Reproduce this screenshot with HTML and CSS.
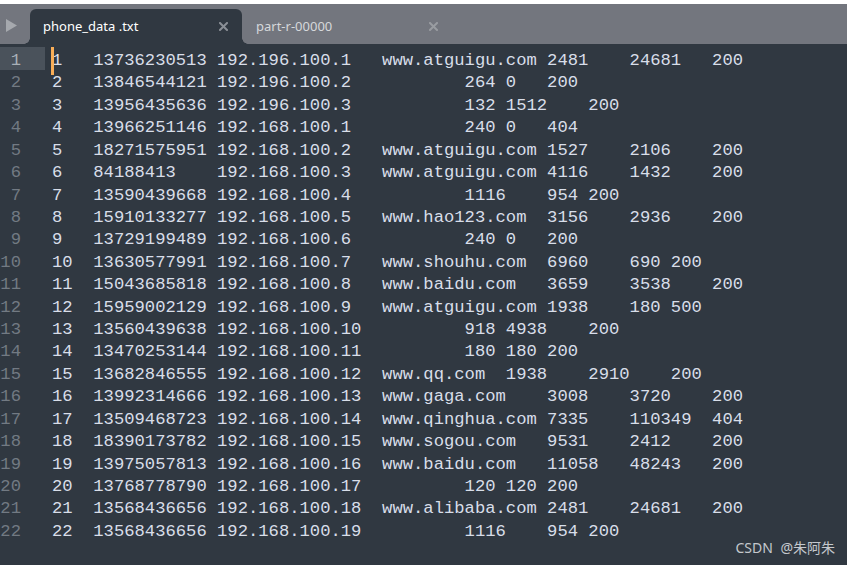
FILE: index.html
```html
<!DOCTYPE html>
<html lang="zh">
<head>
<meta charset="utf-8">
<title>phone_data .txt</title>
<link rel="stylesheet" href="styles.css">
</head>
<body>
<div class="window">
  <div class="topstrip"></div>
  <div class="tabbar">
    <div class="side">
      <svg class="play" width="11" height="13" viewBox="0 0 11 13"><polygon points="0,0 11,6.5 0,13" fill="#a6a9ae"/></svg>
    </div>
    <div class="tab active"><span class="title">phone_data .txt</span><svg class="close" width="9" height="9" viewBox="0 0 9 9"><path d="M1 1 L8 8 M8 1 L1 8" stroke-width="2" stroke-linecap="square"/></svg></div>
    <div class="tab"><span class="title">part-r-00000</span><svg class="close" width="9" height="9" viewBox="0 0 9 9"><path d="M1 1 L8 8 M8 1 L1 8" stroke-width="2" stroke-linecap="square"/></svg></div>
  </div>
  <div class="editor">
    <div class="line current"><span class="ln">1</span><span class="code"><span class="caret"></span>1&#9;13736230513&#9;192.196.100.1&#9;www.atguigu.com&#9;2481&#9;24681&#9;200</span></div>
    <div class="line"><span class="ln">2</span><span class="code">2&#9;13846544121&#9;192.196.100.2&#9;&#9;&#9;264&#9;0&#9;200</span></div>
    <div class="line"><span class="ln">3</span><span class="code">3&#9;13956435636&#9;192.196.100.3&#9;&#9;&#9;132&#9;1512&#9;200</span></div>
    <div class="line"><span class="ln">4</span><span class="code">4&#9;13966251146&#9;192.168.100.1&#9;&#9;&#9;240&#9;0&#9;404</span></div>
    <div class="line"><span class="ln">5</span><span class="code">5&#9;18271575951&#9;192.168.100.2&#9;www.atguigu.com&#9;1527&#9;2106&#9;200</span></div>
    <div class="line"><span class="ln">6</span><span class="code">6&#9;84188413&#9;192.168.100.3&#9;www.atguigu.com&#9;4116&#9;1432&#9;200</span></div>
    <div class="line"><span class="ln">7</span><span class="code">7&#9;13590439668&#9;192.168.100.4&#9;&#9;&#9;1116&#9;954&#9;200</span></div>
    <div class="line"><span class="ln">8</span><span class="code">8&#9;15910133277&#9;192.168.100.5&#9;www.hao123.com&#9;3156&#9;2936&#9;200</span></div>
    <div class="line"><span class="ln">9</span><span class="code">9&#9;13729199489&#9;192.168.100.6&#9;&#9;&#9;240&#9;0&#9;200</span></div>
    <div class="line"><span class="ln">10</span><span class="code">10&#9;13630577991&#9;192.168.100.7&#9;www.shouhu.com&#9;6960&#9;690&#9;200</span></div>
    <div class="line"><span class="ln">11</span><span class="code">11&#9;15043685818&#9;192.168.100.8&#9;www.baidu.com&#9;3659&#9;3538&#9;200</span></div>
    <div class="line"><span class="ln">12</span><span class="code">12&#9;15959002129&#9;192.168.100.9&#9;www.atguigu.com&#9;1938&#9;180&#9;500</span></div>
    <div class="line"><span class="ln">13</span><span class="code">13&#9;13560439638&#9;192.168.100.10&#9;&#9;&#9;918&#9;4938&#9;200</span></div>
    <div class="line"><span class="ln">14</span><span class="code">14&#9;13470253144&#9;192.168.100.11&#9;&#9;&#9;180&#9;180&#9;200</span></div>
    <div class="line"><span class="ln">15</span><span class="code">15&#9;13682846555&#9;192.168.100.12&#9;www.qq.com&#9;1938&#9;2910&#9;200</span></div>
    <div class="line"><span class="ln">16</span><span class="code">16&#9;13992314666&#9;192.168.100.13&#9;www.gaga.com&#9;3008&#9;3720&#9;200</span></div>
    <div class="line"><span class="ln">17</span><span class="code">17&#9;13509468723&#9;192.168.100.14&#9;www.qinghua.com&#9;7335&#9;110349&#9;404</span></div>
    <div class="line"><span class="ln">18</span><span class="code">18&#9;18390173782&#9;192.168.100.15&#9;www.sogou.com&#9;9531&#9;2412&#9;200</span></div>
    <div class="line"><span class="ln">19</span><span class="code">19&#9;13975057813&#9;192.168.100.16&#9;www.baidu.com&#9;11058&#9;48243&#9;200</span></div>
    <div class="line"><span class="ln">20</span><span class="code">20&#9;13768778790&#9;192.168.100.17&#9;&#9;&#9;120&#9;120&#9;200</span></div>
    <div class="line"><span class="ln">21</span><span class="code">21&#9;13568436656&#9;192.168.100.18&#9;www.alibaba.com&#9;2481&#9;24681&#9;200</span></div>
    <div class="line"><span class="ln">22</span><span class="code">22&#9;13568436656&#9;192.168.100.19&#9;&#9;&#9;1116&#9;954&#9;200</span></div>
  </div>
  <div class="watermark">CSDN @朱阿朱</div>
</div>
</body>
</html>
```
FILE: styles.css
```css
html, body {
  margin: 0;
  padding: 0;
  background: #303841;
}
.window {
  position: relative;
  width: 847px;
  height: 565px;
  overflow: hidden;
  background: #303841;
}
.topstrip {
  height: 4px;
  background: #ffffff;
}
.tabbar {
  height: 40px;
  background: #73767e;
  display: flex;
  align-items: flex-end;
  font-family: "Noto Sans", "Open Sans", sans-serif;
  font-size: 13px;
}
.side {
  width: 30px;
  align-self: stretch;
  display: flex;
  align-items: center;
  padding-left: 6px;
  box-sizing: border-box;
}
.play {
  display: block;
  margin-top: 2px;
}
.tab {
  position: relative;
  width: 212px;
  height: 35px;
  box-sizing: border-box;
  display: flex;
  align-items: center;
  justify-content: space-between;
  padding: 0 14px 2px 14px;
  color: #d6d8db;
}
.tab.active {
  background: #303841;
  border-radius: 6px 6px 0 0;
  color: #ffffff;
  padding-left: 13px;
}
.tab.active::before,
.tab.active::after {
  content: "";
  position: absolute;
  bottom: 0;
  width: 6px;
  height: 6px;
}
.tab.active::before {
  left: -6px;
  background: radial-gradient(circle at 0 0, #73767e 5.5px, #303841 6px);
}
.tab.active::after {
  right: -6px;
  background: radial-gradient(circle at 100% 0, #73767e 5.5px, #303841 6px);
}
.close {
  display: block;
  stroke: #8a8f96;
  margin-top: 2px;
}
.tab:not(.active) .close {
  stroke: #999ca1;
  margin-right: 2px;
}
.editor {
  padding-top: 3px;
  font-family: "Liberation Mono", monospace;
  font-size: 17.2px;
  color: #d8dee9;
}
.line {
  display: flex;
  height: 22.43px;
  line-height: 22.43px;
  white-space: pre;
  tab-size: 4;
  -moz-tab-size: 4;
}
.ln {
  width: 45px;
  flex: none;
  box-sizing: border-box;
  padding: 3px 24px 0 0;
  text-align: right;
  color: #727a83;
}
.current .ln {
  background: #4a525b;
  color: #a9b0b7;
  height: 23px;
}
.code {
  position: relative;
  padding: 3px 0 0 7px;
}
.caret {
  position: absolute;
  left: 6px;
  top: 0;
  width: 3px;
  height: 28px;
  background: #f9ae58;
}
.watermark {
  position: absolute;
  right: 12px;
  bottom: 8px;
  font-family: "Noto Sans", "Noto Sans CJK SC", sans-serif;
  font-size: 14px;
  word-spacing: 4px;
  color: #c5c8cd;
}
```
